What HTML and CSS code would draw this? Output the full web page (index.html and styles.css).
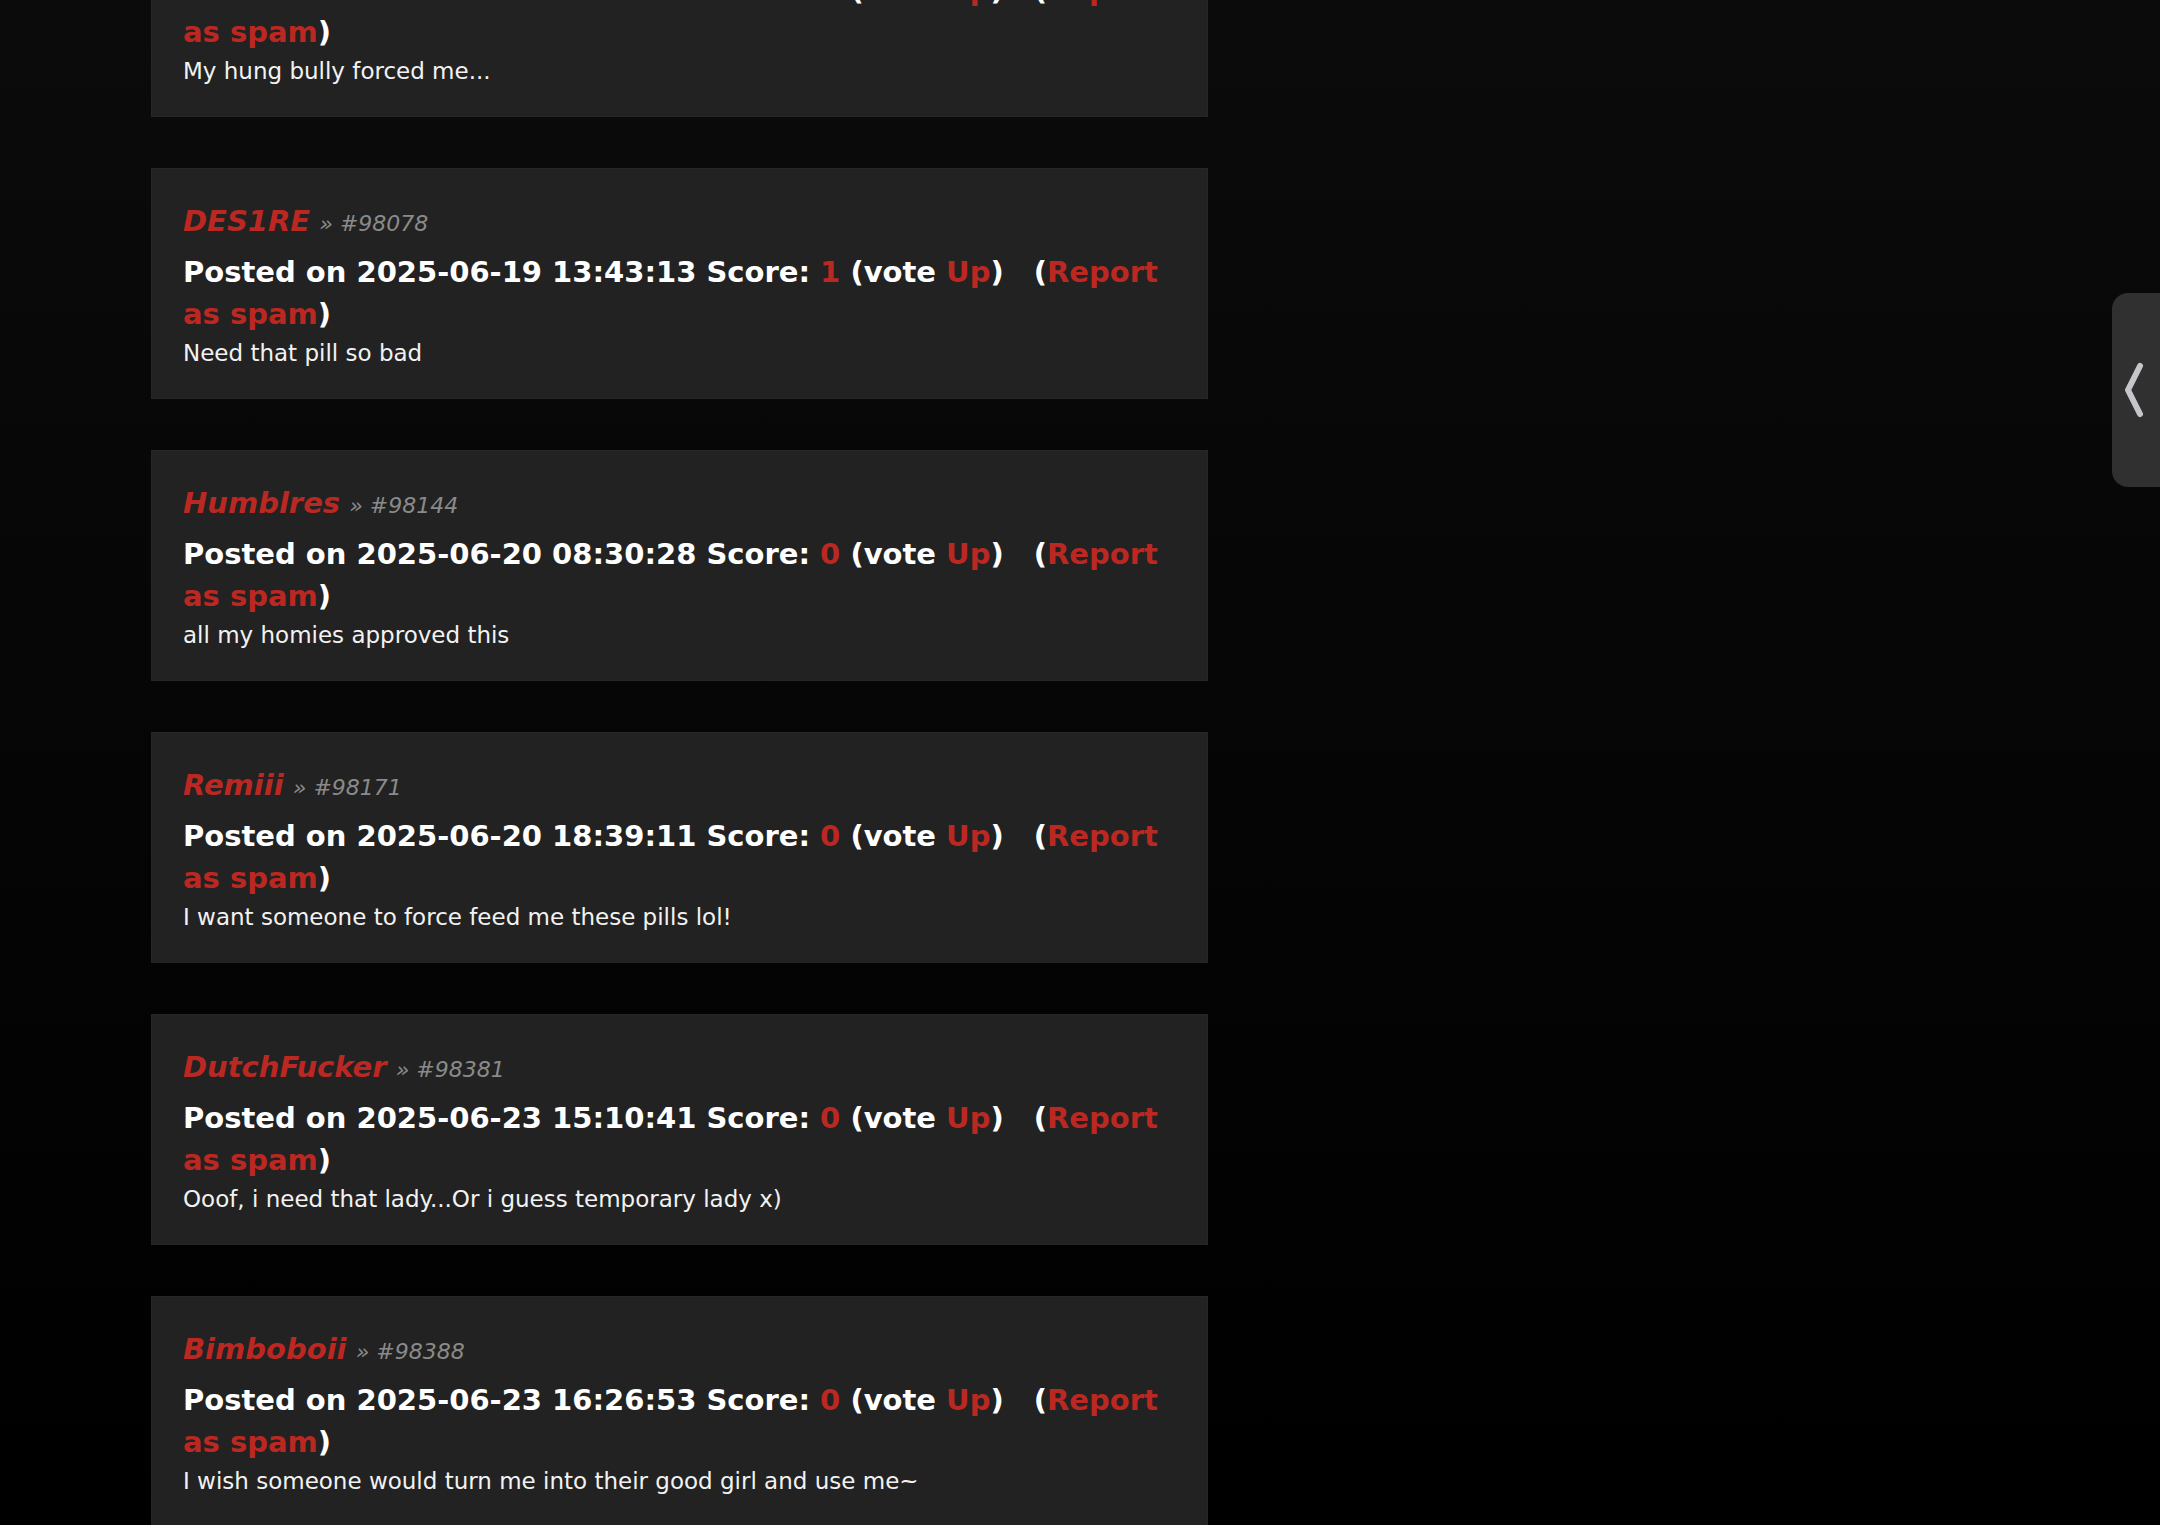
FILE: index.html
```html
<!DOCTYPE html>
<html lang="en">
<head>
<meta charset="utf-8">
<title>Comments</title>
<link rel="stylesheet" href="styles.css">
</head>
<body>
<main class="page">
  <section class="comments">
    <article class="comment">
      <div class="head"><a class="user">Sissyslut</a> <span class="meta">» #98051</span></div>
      <div class="posted">Posted on 2025-06-18 22:17:45 Score: <a class="red">0</a> (vote <a class="red">Up</a>)<span class="gap"></span>(<a class="red">Report as spam</a>)</div>
      <div class="text">My hung bully forced me...</div>
    </article>
    <article class="comment">
      <div class="head"><a class="user">DES1RE</a> <span class="meta">» #98078</span></div>
      <div class="posted">Posted on 2025-06-19 13:43:13 Score: <a class="red">1</a> (vote <a class="red">Up</a>)<span class="gap"></span>(<a class="red">Report as spam</a>)</div>
      <div class="text">Need that pill so bad</div>
    </article>
    <article class="comment">
      <div class="head"><a class="user">Humblres</a> <span class="meta">» #98144</span></div>
      <div class="posted">Posted on 2025-06-20 08:30:28 Score: <a class="red">0</a> (vote <a class="red">Up</a>)<span class="gap"></span>(<a class="red">Report as spam</a>)</div>
      <div class="text">all my homies approved this</div>
    </article>
    <article class="comment">
      <div class="head"><a class="user">Remiii</a> <span class="meta">» #98171</span></div>
      <div class="posted">Posted on 2025-06-20 18:39:11 Score: <a class="red">0</a> (vote <a class="red">Up</a>)<span class="gap"></span>(<a class="red">Report as spam</a>)</div>
      <div class="text">I want someone to force feed me these pills lol!</div>
    </article>
    <article class="comment">
      <div class="head"><a class="user">DutchFucker</a> <span class="meta">» #98381</span></div>
      <div class="posted">Posted on 2025-06-23 15:10:41 Score: <a class="red">0</a> (vote <a class="red">Up</a>)<span class="gap"></span>(<a class="red">Report as spam</a>)</div>
      <div class="text">Ooof, i need that lady...Or i guess temporary lady x)</div>
    </article>
    <article class="comment">
      <div class="head"><a class="user">Bimboboii</a> <span class="meta">» #98388</span></div>
      <div class="posted">Posted on 2025-06-23 16:26:53 Score: <a class="red">0</a> (vote <a class="red">Up</a>)<span class="gap"></span>(<a class="red">Report as spam</a>)</div>
      <div class="text">I wish someone would turn me into their good girl and use me~</div>
    </article>
  </section>
  <div class="handle" aria-label="Open panel">
    <svg width="24" height="60" viewBox="0 0 24 60" aria-hidden="true">
      <polyline points="15,6 3,30 15,54" fill="none" stroke="#c6c6ca" stroke-width="6" stroke-linecap="round" stroke-linejoin="round"/>
    </svg>
  </div>
</main>
</body>
</html>
```
FILE: styles.css
```css
html, body {
  margin: 0;
  padding: 0;
  height: 100%;
}
body {
  background: linear-gradient(to bottom, #0b0b0b 0%, #050505 50%, #000000 100%);
  font-family: "DejaVu Sans", Verdana, sans-serif;
  color: #ffffff;
  overflow: hidden;
}
.page {
  padding-left: 151px;
}
.comments {
  display: flex;
  flex-direction: column;
  gap: 51px;
  width: 1057px;
  margin-top: -114px;
}
.comment {
  box-sizing: border-box;
  background: #222222;
  border: 1px solid #262626;
  padding: 31px 30px 30px 31px;
}
.head {
  font-size: 29px;
  line-height: 42px;
}
.user {
  color: #bb2822;
  font-weight: bold;
  font-style: italic;
}
.meta {
  color: #8a8a8a;
  font-style: italic;
  font-size: 22px;
  line-height: 20px;
}
.posted {
  margin-top: 10px;
  font-size: 29px;
  line-height: 41.5px;
  font-weight: bold;
  color: #ffffff;
}
.red {
  color: #bb2822;
}
.gap {
  display: inline-block;
  width: 30px;
}
.text {
  margin-top: 3px;
  font-size: 23px;
  line-height: 30px;
  color: #f2f2f2;
}
.handle {
  position: fixed;
  top: 293px;
  right: 0;
  width: 48px;
  height: 194px;
  background: #303030;
  border-radius: 16px 0 0 16px;
  display: flex;
  align-items: center;
  padding-left: 13px;
  box-sizing: border-box;
}
```
